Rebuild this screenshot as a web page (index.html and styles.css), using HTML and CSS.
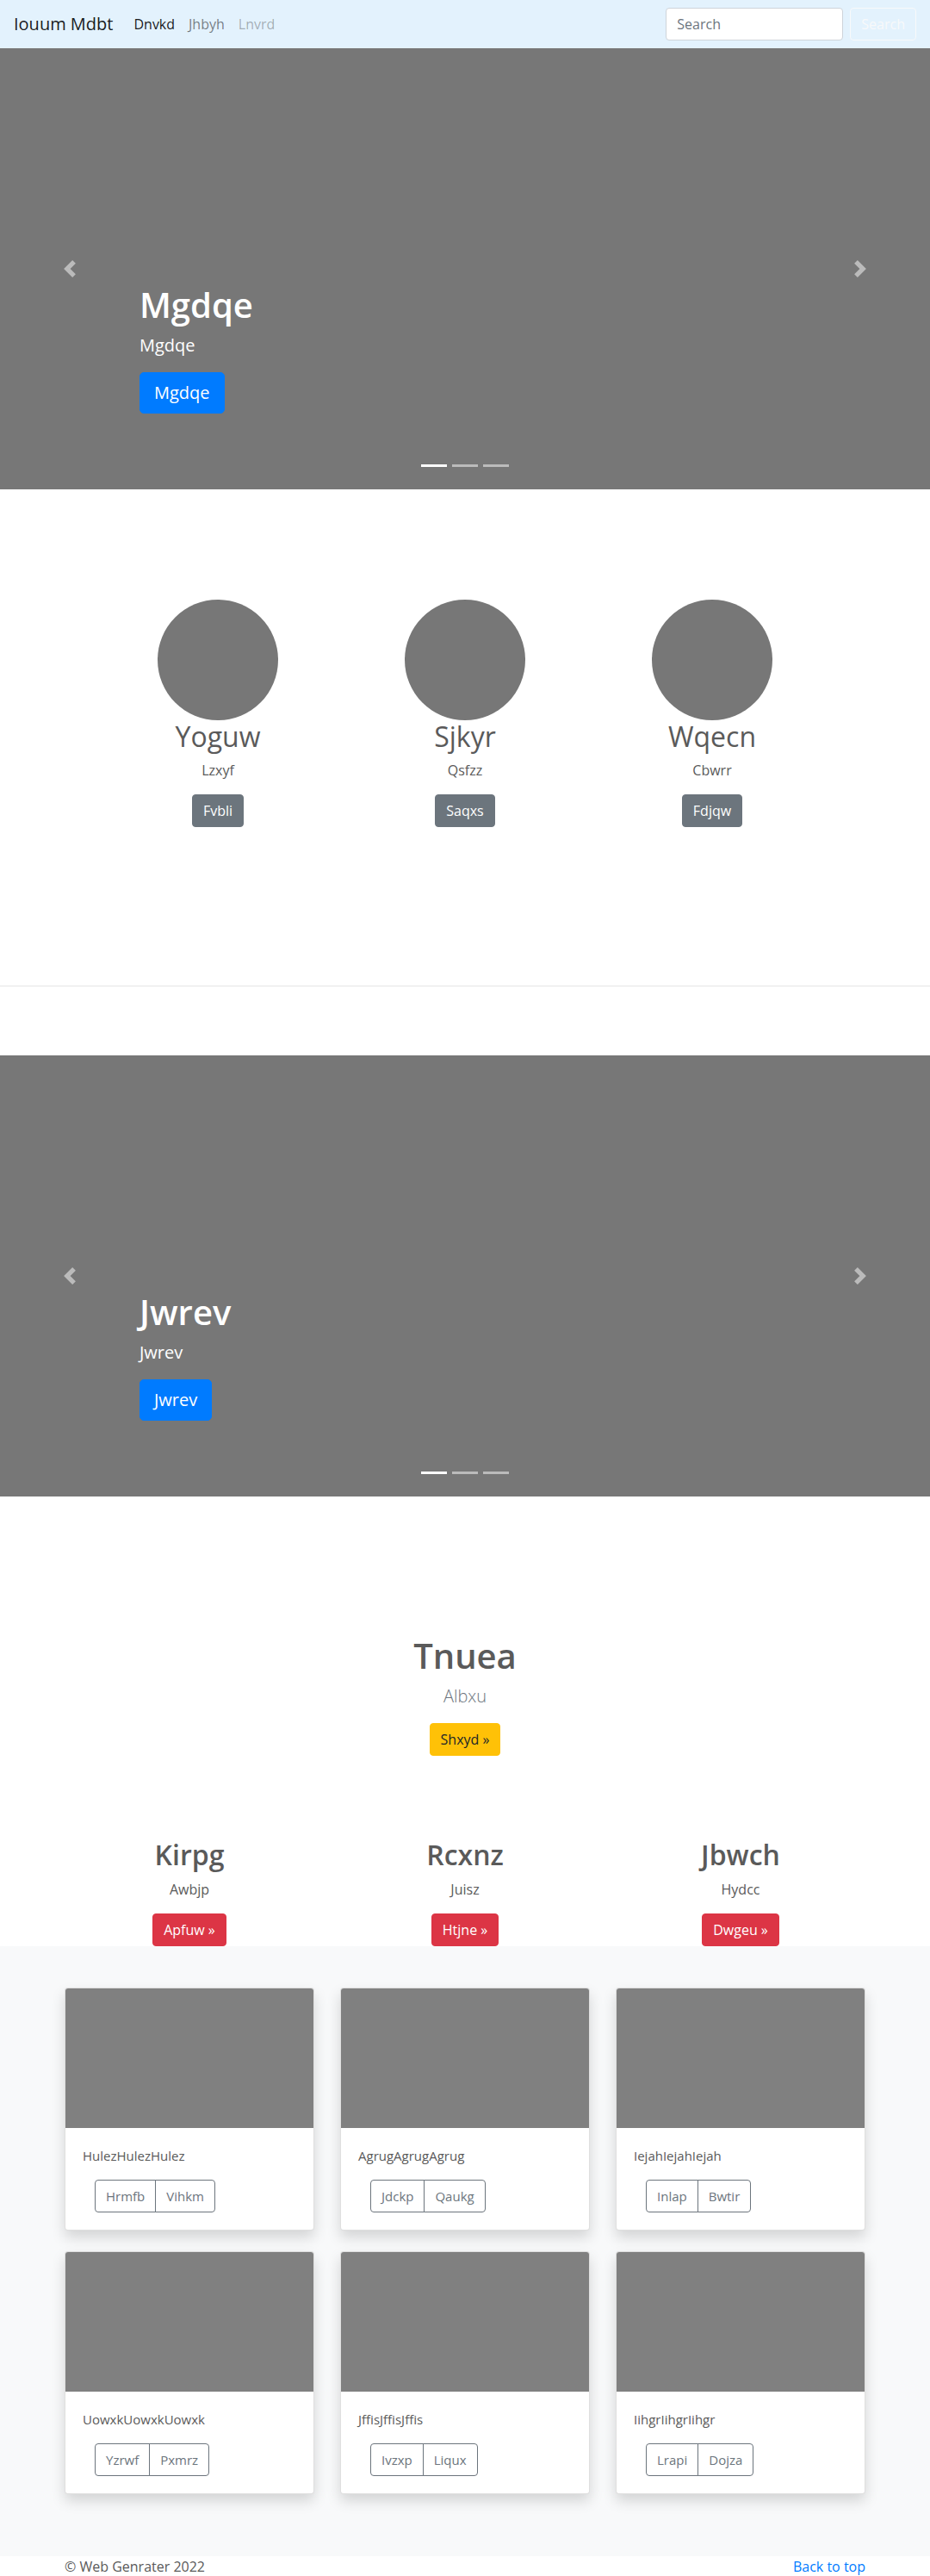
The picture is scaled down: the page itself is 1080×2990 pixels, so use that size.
FILE: index.html
```html
<!DOCTYPE html>
<html lang="en">
<head>
<meta charset="utf-8">
<title>Iouum Mdbt</title>
<link rel="stylesheet" href="styles.css">
</head>
<body>
<nav class="navbar">
  <a class="brand" href="#">Iouum Mdbt</a>
  <ul class="nav">
    <li><a class="nav-link active" href="#">Dnvkd</a></li>
    <li><a class="nav-link" href="#">Jhbyh</a></li>
    <li><a class="nav-link disabled" href="#">Lnvrd</a></li>
  </ul>
  <form class="search">
    <input class="search-input" type="text" placeholder="Search">
    <button class="btn btn-outline-light" type="button">Search</button>
  </form>
</nav>

<section class="carousel">
  <div class="slide">
    <div class="caption">
      <h1 class="caption-title">Mgdqe</h1>
      <p class="caption-lead">Mgdqe</p>
      <p class="cta"><a class="btn btn-lg btn-primary" href="#">Mgdqe</a></p>
    </div>
  </div>
  <ol class="indicators"><li class="active"></li><li></li><li></li></ol>
  <a class="control prev" href="#"><svg class="control-icon" viewBox="0 0 8 8"><path d="M5.25 0l-4 4 4 4 1.5-1.5L4.25 4l2.5-2.5L5.25 0z"/></svg></a>
  <a class="control next" href="#"><svg class="control-icon" viewBox="0 0 8 8"><path d="M2.75 0l-1.5 1.5L3.75 4l-2.5 2.5L2.75 8l4-4-4-4z"/></svg></a>
</section>

<section class="marketing">
  <div class="marketing-row">
    <div class="member">
      <div class="avatar"></div>
      <h2 class="member-name">Yoguw</h2>
      <p class="member-text">Lzxyf</p>
      <p class="cta"><a class="btn btn-secondary" href="#">Fvbli</a></p>
    </div>
    <div class="member">
      <div class="avatar"></div>
      <h2 class="member-name">Sjkyr</h2>
      <p class="member-text">Qsfzz</p>
      <p class="cta"><a class="btn btn-secondary" href="#">Saqxs</a></p>
    </div>
    <div class="member">
      <div class="avatar"></div>
      <h2 class="member-name">Wqecn</h2>
      <p class="member-text">Cbwrr</p>
      <p class="cta"><a class="btn btn-secondary" href="#">Fdjqw</a></p>
    </div>
  </div>
</section>

<hr class="divider">

<section class="carousel">
  <div class="slide">
    <div class="caption">
      <h1 class="caption-title">Jwrev</h1>
      <p class="caption-lead">Jwrev</p>
      <p class="cta"><a class="btn btn-lg btn-primary" href="#">Jwrev</a></p>
    </div>
  </div>
  <ol class="indicators"><li class="active"></li><li></li><li></li></ol>
  <a class="control prev" href="#"><svg class="control-icon" viewBox="0 0 8 8"><path d="M5.25 0l-4 4 4 4 1.5-1.5L4.25 4l2.5-2.5L5.25 0z"/></svg></a>
  <a class="control next" href="#"><svg class="control-icon" viewBox="0 0 8 8"><path d="M2.75 0l-1.5 1.5L3.75 4l-2.5 2.5L2.75 8l4-4-4-4z"/></svg></a>
</section>

<section class="feature">
  <div class="hero">
    <h1 class="hero-title">Tnuea</h1>
    <p class="hero-lead">Albxu</p>
    <p class="cta"><a class="btn btn-warning" href="#">Shxyd &raquo;</a></p>
  </div>
  <div class="feature-row">
    <div class="feature-col">
      <h2 class="feature-title">Kirpg</h2>
      <p class="feature-text">Awbjp</p>
      <p class="cta"><a class="btn btn-danger" href="#">Apfuw &raquo;</a></p>
    </div>
    <div class="feature-col">
      <h2 class="feature-title">Rcxnz</h2>
      <p class="feature-text">Juisz</p>
      <p class="cta"><a class="btn btn-danger" href="#">Htjne &raquo;</a></p>
    </div>
    <div class="feature-col">
      <h2 class="feature-title">Jbwch</h2>
      <p class="feature-text">Hydcc</p>
      <p class="cta"><a class="btn btn-danger" href="#">Dwgeu &raquo;</a></p>
    </div>
  </div>
</section>

<section class="album">
  <div class="album-grid">
    <div class="card">
      <div class="card-img"></div>
      <div class="card-body">
        <p class="card-text">HulezHulezHulez</p>
        <div class="btn-group"><a class="btn btn-outline-secondary" href="#">Hrmfb</a><a class="btn btn-outline-secondary" href="#">Vihkm</a></div>
      </div>
    </div>
    <div class="card">
      <div class="card-img"></div>
      <div class="card-body">
        <p class="card-text">AgrugAgrugAgrug</p>
        <div class="btn-group"><a class="btn btn-outline-secondary" href="#">Jdckp</a><a class="btn btn-outline-secondary" href="#">Qaukg</a></div>
      </div>
    </div>
    <div class="card">
      <div class="card-img"></div>
      <div class="card-body">
        <p class="card-text">IejahIejahIejah</p>
        <div class="btn-group"><a class="btn btn-outline-secondary" href="#">Inlap</a><a class="btn btn-outline-secondary" href="#">Bwtir</a></div>
      </div>
    </div>
    <div class="card">
      <div class="card-img"></div>
      <div class="card-body">
        <p class="card-text">UowxkUowxkUowxk</p>
        <div class="btn-group"><a class="btn btn-outline-secondary" href="#">Yzrwf</a><a class="btn btn-outline-secondary" href="#">Pxmrz</a></div>
      </div>
    </div>
    <div class="card">
      <div class="card-img"></div>
      <div class="card-body">
        <p class="card-text">JffisJffisJffis</p>
        <div class="btn-group"><a class="btn btn-outline-secondary" href="#">Ivzxp</a><a class="btn btn-outline-secondary" href="#">Liqux</a></div>
      </div>
    </div>
    <div class="card">
      <div class="card-img"></div>
      <div class="card-body">
        <p class="card-text">IihgrIihgrIihgr</p>
        <div class="btn-group"><a class="btn btn-outline-secondary" href="#">Lrapi</a><a class="btn btn-outline-secondary" href="#">Dojza</a></div>
      </div>
    </div>
  </div>
</section>

<footer class="footer">
  <p class="copy">&copy; Web Genrater 2022</p>
  <a class="to-top" href="#">Back to top</a>
</footer>
</body>
</html>
```

FILE: styles.css
```css
* { box-sizing: border-box; }

html, body {
  margin: 0;
  padding: 0;
}

body {
  font-family: "Segoe UI", "Open Sans", "Noto Sans", sans-serif;
  font-size: 16px;
  line-height: 1.5;
  color: #5a5a5a;
  background: #fff;
}

a { text-decoration: none; }

/* ---------- navbar ---------- */
.navbar {
  display: flex;
  align-items: center;
  height: 56px;
  padding: 8px 16px;
  background: #e3f2fd;
}

.brand {
  font-size: 20px;
  line-height: 30px;
  padding: 5px 0;
  margin-right: 16px;
  color: rgba(0, 0, 0, 0.9);
}

.nav {
  display: flex;
  list-style: none;
  margin: 0;
  padding: 0;
}

.nav-link {
  display: block;
  padding: 8px;
  color: rgba(0, 0, 0, 0.5);
}
.nav-link.active { color: rgba(0, 0, 0, 0.9); }
.nav-link.disabled { color: rgba(0, 0, 0, 0.3); }

.search {
  display: flex;
  margin: 0 0 0 auto;
}

.search-input {
  width: 206px;
  height: 38px;
  margin-right: 8px;
  padding: 6px 12px;
  font: inherit;
  color: #495057;
  background: #fff;
  border: 1px solid #ced4da;
  border-radius: 4px;
}
.search-input::placeholder { color: #6c757d; }

/* ---------- buttons ---------- */
.btn {
  display: inline-block;
  font-family: inherit;
  font-size: 16px;
  line-height: 24px;
  padding: 6px 12px;
  border: 1px solid transparent;
  border-radius: 4px;
  background: transparent;
  white-space: nowrap;
  vertical-align: middle;
}

.btn-lg {
  font-size: 20px;
  line-height: 30px;
  padding: 8px 16px;
  border-radius: 5px;
}

.btn-outline-light { color: #f8f9fa; border-color: #f8f9fa; }
.btn-primary { color: #fff; background: #007bff; border-color: #007bff; }
.btn-secondary { color: #fff; background: #6c757d; border-color: #6c757d; }
.btn-warning { color: #212529; background: #ffc107; border-color: #ffc107; }
.btn-danger { color: #fff; background: #dc3545; border-color: #dc3545; }
.btn-outline-secondary { color: #6c757d; border-color: #6c757d; }

.cta { margin: 0; }

/* ---------- carousel ---------- */
.carousel {
  position: relative;
  height: 512px;
  background: #777;
  overflow: hidden;
}

.slide {
  height: 100%;
  display: flex;
  flex-direction: column;
  justify-content: flex-end;
  padding: 0 15% 72px;
}

.caption { color: #fff; }

.caption-title {
  margin: 0 0 8px;
  font-size: 40px;
  line-height: 48px;
  font-weight: 600;
}

.caption-lead {
  margin: 0 0 16px;
  font-size: 20px;
  line-height: 30px;
}

.caption .cta { margin-bottom: 16px; }

.indicators {
  position: absolute;
  left: 15%;
  right: 15%;
  bottom: 0;
  margin: 0 0 16px;
  padding: 0;
  list-style: none;
  display: flex;
  justify-content: center;
}

.indicators li {
  width: 30px;
  height: 23px;
  margin: 0 3px;
  border-top: 10px solid transparent;
  border-bottom: 10px solid transparent;
  background: #fff;
  background-clip: padding-box;
  opacity: 0.5;
}
.indicators li.active { opacity: 1; }

.control {
  position: absolute;
  top: 0;
  bottom: 0;
  width: 15%;
  display: flex;
  align-items: center;
  justify-content: center;
  opacity: 0.5;
}
.control.prev { left: 0; }
.control.next { right: 0; }

.control-icon {
  width: 20px;
  height: 20px;
  fill: #fff;
}

/* ---------- marketing ---------- */
.marketing {
  padding: 128px 0 184px;
}

.marketing-row {
  width: 861px;
  margin: 0 auto;
  display: grid;
  grid-template-columns: repeat(3, 1fr);
  text-align: center;
}

.avatar {
  width: 140px;
  height: 140px;
  margin: 0 auto;
  border-radius: 50%;
  background: #777;
}

.member-name {
  margin: 0 0 8px;
  font-size: 32px;
  line-height: 38.4px;
  font-weight: 400;
}

.member-text {
  margin: 0 0 16px;
  font-size: 16px;
}

.divider {
  margin: 0 0 80px;
  border: 0;
  border-top: 1px solid rgba(0, 0, 0, 0.1);
  height: 0;
}

/* ---------- feature ---------- */
.feature {
  padding-top: 161px;
}

.hero {
  text-align: center;
  margin-bottom: 96px;
}

.hero-title {
  margin: 0 0 8px;
  font-size: 40px;
  line-height: 48px;
  font-weight: 600;
}

.hero-lead {
  margin: 0 0 16px;
  font-size: 20px;
  line-height: 30px;
  font-weight: 300;
  color: #6c757d;
}

.feature-row {
  width: 960px;
  margin: 0 auto;
  display: grid;
  grid-template-columns: repeat(3, 1fr);
  text-align: center;
}

.feature-title {
  margin: 0 0 8px;
  font-size: 32px;
  line-height: 38.4px;
  font-weight: 600;
}

.feature-text {
  margin: 0 0 16px;
}

/* ---------- album ---------- */
.album {
  background: #f8f9fa;
  padding: 48px 0;
}

.album-grid {
  width: 930px;
  margin: 0 auto;
  display: grid;
  grid-template-columns: repeat(3, 1fr);
  column-gap: 30px;
}

.card {
  margin-bottom: 24px;
  background: #fff;
  border: 1px solid rgba(0, 0, 0, 0.125);
  border-radius: 4px;
  box-shadow: 0 8px 16px rgba(0, 0, 0, 0.15);
  overflow: hidden;
}

.card-img {
  height: 162px;
  background: #808080;
}

.card-body {
  padding: 20px;
}

.card-text {
  margin: 0 0 16px;
  font-size: 15px;
  line-height: 24px;
  color: #5a5a5a;
}

.btn-group {
  display: inline-flex;
  margin-left: 14px;
}

.btn-group .btn {
  font-size: 15px;
  border-radius: 0;
}
.btn-group .btn:first-child { border-radius: 4px 0 0 4px; }
.btn-group .btn:last-child { border-radius: 0 4px 4px 0; margin-left: -1px; }

/* ---------- footer ---------- */
.footer {
  width: 930px;
  margin: 0 auto;
  display: flex;
  justify-content: space-between;
  line-height: 24px;
}

.copy { margin: 0; color: #5a5a5a; }
.to-top { color: #007bff; }
```
